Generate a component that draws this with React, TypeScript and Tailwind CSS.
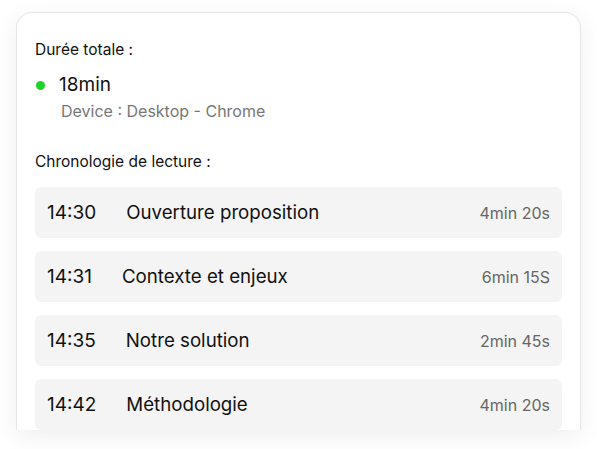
const rows = [
  { time: '14:30', title: 'Ouverture proposition', dur: '4min 20s' },
  { time: '14:31', title: 'Contexte et enjeux', dur: '6min 15S' },
  { time: '14:35', title: 'Notre solution', dur: '2min 45s' },
  { time: '14:42', title: 'Méthodologie', dur: '4min 20s' },
];

export default function App() {
  return (
    <div className="w-[597px] h-[449px] bg-white pt-3 px-4 font-['Inter',sans-serif] text-[#111]">
      <div className="h-[418px] overflow-hidden rounded-t-2xl border border-b-0 border-[#e6e6e6] bg-white shadow-[0_6px_24px_rgba(0,0,0,0.07)] px-[18px] pt-[27px]">
        <p className="text-[15.5px] leading-5">Durée totale :</p>
        <div className="mt-[13px] flex items-center gap-[14px] pl-[1px]">
          <span className="w-[9px] h-[9px] rounded-full bg-[#1ed42a]" />
          <span className="text-[19px] leading-6">18min</span>
        </div>
        <p className="mt-[4px] pl-[26px] text-[16px] leading-5 text-[#777]">Device : Desktop - Chrome</p>
        <p className="mt-[31px] text-[15.5px] leading-5">Chronologie de lecture :</p>
        <div className="mt-[15px] flex flex-col gap-[13px]">
          {rows.map((r) => (
            <div key={r.time} className="h-[51px] rounded-md bg-[#f4f4f4] px-3 flex items-center">
              <div className="flex-1 flex items-baseline leading-6">
                <span className="text-[19px] mr-[30px]">{r.time}</span>
                <span className="text-[18.7px] flex-1">{r.title}</span>
                <span className="text-[16px] text-[#666]">{r.dur}</span>
              </div>
            </div>
          ))}
        </div>
      </div>
    </div>
  );
}
